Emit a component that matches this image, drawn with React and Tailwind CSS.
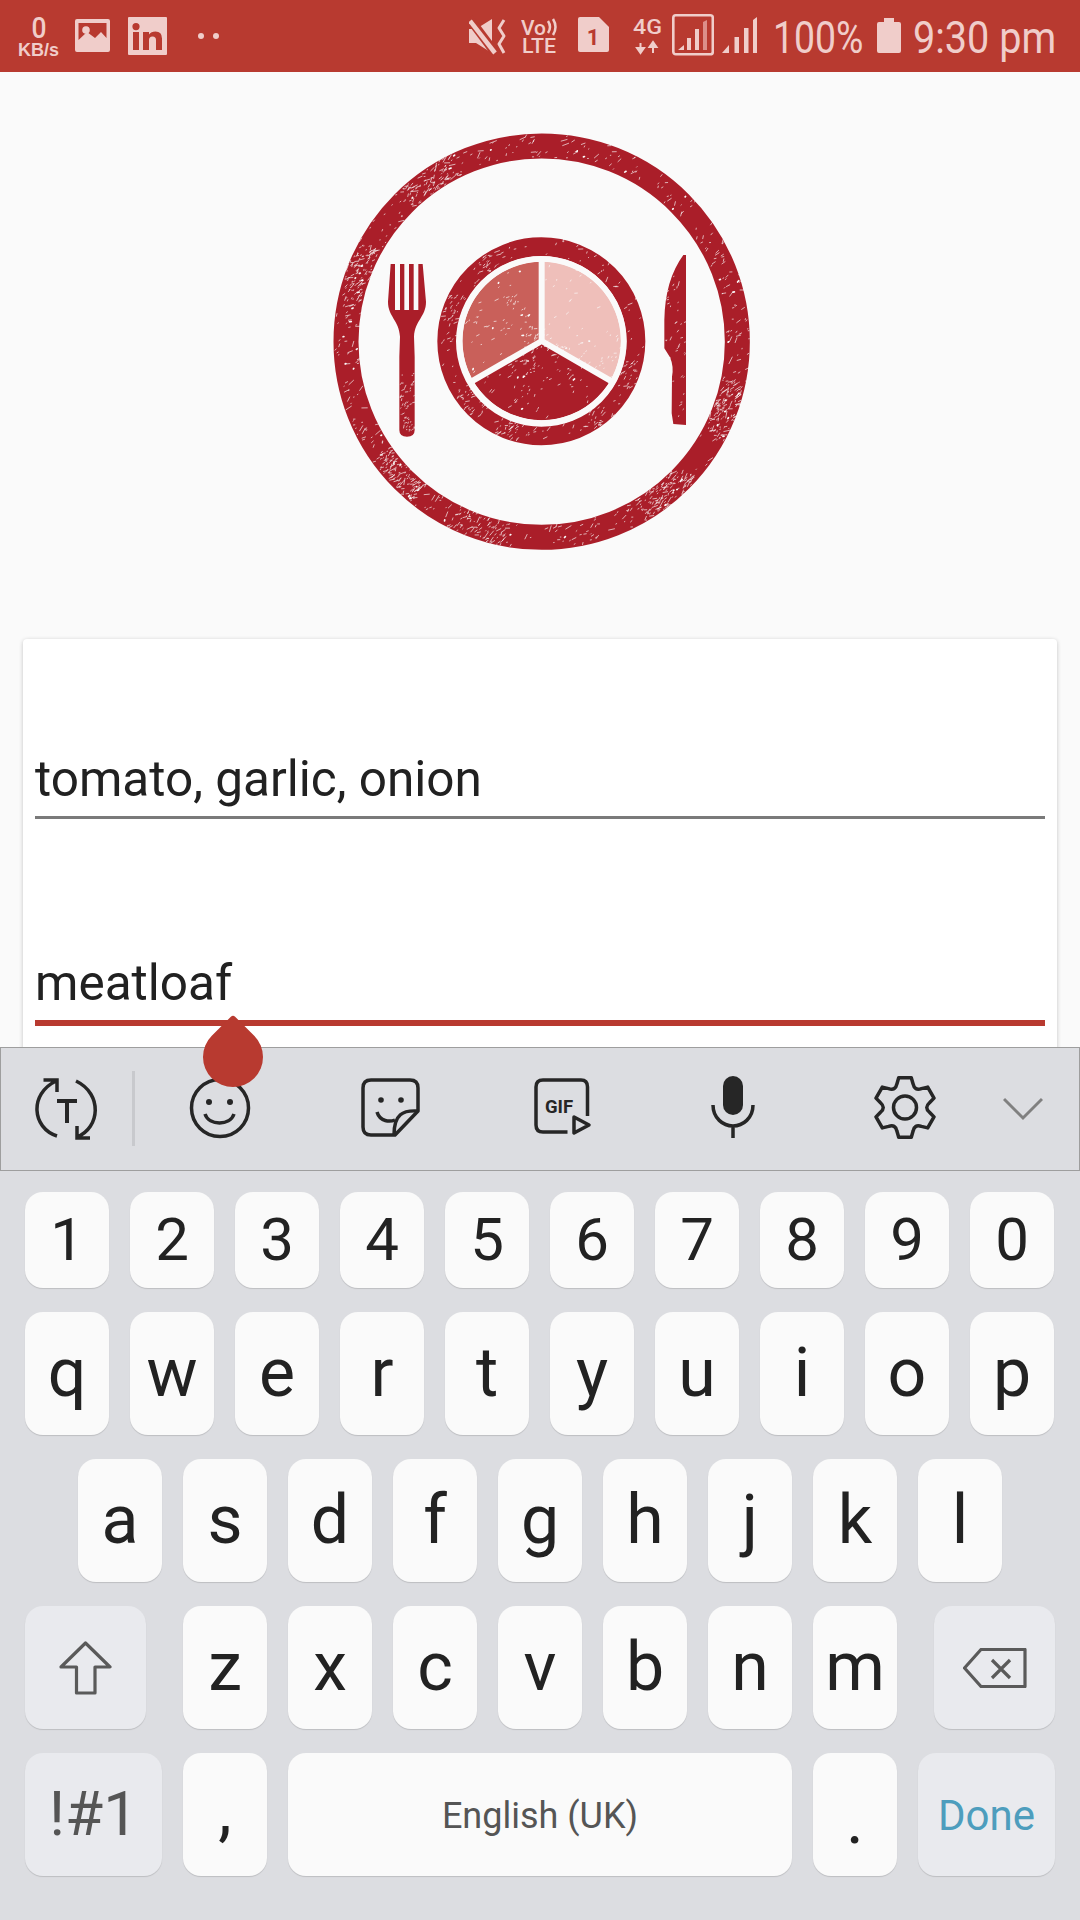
const rng = (s) => () => (s = (s * 16807) % 2147483647) / 2147483647;

function scratch(r, x, y, maxLen) {
  const len = 1.5 + r() * r() * maxLen;
  const a = -0.7 + (r() - 0.5) * 1.4;
  return `M${x.toFixed(1)} ${y.toFixed(1)}l${(Math.cos(a) * len).toFixed(1)} ${(Math.sin(a) * len).toFixed(1)}`;
}
function ringSpecks(seed, cx, cy, r0, r1, n, maxLen) {
  const r = rng(seed);
  let d = "";
  for (let i = 0; i < n; i++) {
    let a = r() * Math.PI * 2;
    if (r() < 0.55) a = [3.5, 2.4, 0.35, 0.9, 1.9, 4.1][Math.floor(r() * 6)] + (r() - 0.5) * 0.3;
    const rad = r0 + r() * (r1 - r0);
    d += scratch(r, cx + Math.cos(a) * rad, cy + Math.sin(a) * rad, maxLen);
  }
  return d;
}
function boxSpecks(seed, x0, y0, x1, y1, n, maxLen) {
  const r = rng(seed);
  let d = "";
  for (let i = 0; i < n; i++) d += scratch(r, x0 + r() * (x1 - x0), y0 + r() * (y1 - y0), maxLen);
  return d;
}
const fine =
  ringSpecks(11, 665, 665, 552, 624, 950, 22) +
  ringSpecks(23, 664, 664, 258, 310, 240, 16) +
  ringSpecks(37, 665, 663, 6, 236, 230, 11) +
  boxSpecks(41, 240, 760, 282, 940, 50, 12) +
  boxSpecks(43, 1036, 460, 1096, 910, 45, 12);
const blobs = ringSpecks(53, 665, 665, 556, 622, 45, 8) + ringSpecks(59, 665, 663, 20, 230, 16, 5);

function sector(cx, cy, r, a0, a1) {
  const p = (a) => `${(cx + Math.cos(a) * r).toFixed(1)} ${(cy + Math.sin(a) * r).toFixed(1)}`;
  return `M${cx} ${cy}L${p(a0)}A${r} ${r} 0 0 1 ${p(a1)}Z`;
}
const D = Math.PI / 180;
const spoke = (a) => `M665 663L${(665 + Math.cos(a) * 250).toFixed(1)} ${(663 + Math.sin(a) * 250).toFixed(1)}`;

function Logo() {
  return (
    <svg viewBox="0 0 1320 1320" className="h-[440px] w-[440px]">
      <circle cx="665" cy="665" r="587" fill="none" stroke="#aa1e29" strokeWidth="75" />
      <circle cx="664" cy="664" r="284" fill="none" stroke="#aa1e29" strokeWidth="56" />
      <path d={sector(665, 663, 238, -90 * D, 30 * D)} fill="#efbfba" />
      <path d={sector(665, 663, 238, 150 * D, 270 * D)} fill="#c9605a" />
      <path d={sector(665, 663, 238, 30 * D, 150 * D)} fill="#aa1e29" />
      <path d="M212 432H225V570H240V432H253V570H267V432H281V570H295V432H308L318 545C318 590 285 600 282 650L284 710V930Q284 950 261 950Q238 950 238 930V710L240 650C237 600 204 590 204 545Z" fill="#aa1e29" />
      <path d="M1090 405H1098V915L1060 912L1055 880L1056 770Q1062 740 1050 712L1033 685V600Q1035 480 1090 405Z" fill="#aa1e29" />
      <path d={fine} stroke="#fafafa" strokeWidth="2" fill="none" strokeLinecap="round" />
      <path d={blobs} stroke="#fafafa" strokeWidth="5" fill="none" strokeLinecap="round" />
      <path d={`${spoke(-90 * D)}${spoke(30 * D)}${spoke(150 * D)}`} stroke="#fafafa" strokeWidth="18" fill="none" />
      <circle cx="665" cy="663" r="246" fill="none" stroke="#fafafa" strokeWidth="17" />
    </svg>
  );
}

const SB = "#f0cdca";

function StatusBar() {
  return (
    <div className="flex h-[72px] shrink-0 justify-between bg-[#b83a30] pl-[18px] pr-[25px] text-[#f0cdca]">
      <div className="flex">
        <svg width="42" height="72" viewBox="0 0 42 72">
          <text x="21" y="38" textAnchor="middle" fontSize="30" fontFamily="Roboto" fontWeight="500" fill={SB} textLength="15" lengthAdjust="spacingAndGlyphs">0</text>
          <text x="0" y="56" fontSize="18" fontFamily="Liberation Sans" fontWeight="700" fill={SB} textLength="41" lengthAdjust="spacingAndGlyphs">KB/s</text>
        </svg>
        <svg width="35" height="72" viewBox="0 0 35 72" className="ml-[15px]">
          <path fillRule="evenodd" d="M2 19H33Q35 19 35 21V50Q35 52 33 52H2Q0 52 0 50V21Q0 19 2 19ZM3.500 23V40L12 32L20 38L26 32L31.500 38V23Z" fill={SB} />
          <circle cx="11" cy="30" r="3.800" fill={SB} />
        </svg>
        <svg width="39" height="72" viewBox="0 0 39 72" className="ml-[18px]">
          <path fillRule="evenodd" d="M1 17H38Q39 17 39 18V54Q39 55 38 55H1Q0 55 0 54V18Q0 17 1 17ZM5 32V50H11V32ZM8 23A3.600 3.600 0 1 0 8 30.200A3.600 3.600 0 1 0 8 23ZM15 32V50H21V40Q21 36.500 24.500 36.500Q28 36.500 28 40V50H34V38.500Q34 31.500 27.500 31.500Q23 31.500 21 34.500V32Z" fill={SB} />
        </svg>
        <svg width="24" height="72" viewBox="0 0 24 72" className="ml-[30px]">
          <circle cx="4" cy="36" r="3" fill={SB} />
          <circle cx="19" cy="36" r="3" fill={SB} />
        </svg>
      </div>
      <div className="flex">
        <svg width="38" height="72" viewBox="0 0 38 72">
          <path d="M0 29H7L23 19V53L7 43H0Z" fill={SB} />
          <path d="M0 18L27 54" stroke="#b83a30" strokeWidth="9" />
          <path d="M1 21L26 53" stroke={SB} strokeWidth="4.500" />
          <path d="M35 20L30 28L35 36L30 44L35 53" stroke={SB} strokeWidth="3" fill="none" strokeLinejoin="round" />
        </svg>
        <svg width="38" height="72" viewBox="0 0 38 72" className="ml-[14px]">
          <text x="0" y="35" fontSize="21" fontFamily="Roboto" fontWeight="500" fill={SB} textLength="25" lengthAdjust="spacingAndGlyphs">Vo</text>
          <path d="M27 21Q31 27 27 33M32 19Q37 27 32 35" stroke={SB} strokeWidth="2.500" fill="none" />
          <text x="1" y="53" fontSize="20" fontFamily="Roboto" fontWeight="500" fill={SB} textLength="34" lengthAdjust="spacingAndGlyphs">LTE</text>
        </svg>
        <svg width="31" height="72" viewBox="0 0 31 72" className="ml-[19px]">
          <path d="M2 17H21L31 27V50Q31 52 29 52H2Q0 52 0 50V19Q0 17 2 17Z" fill={SB} />
          <text x="15" y="45" textAnchor="middle" fontSize="22" fontFamily="Roboto" fontWeight="700" fill="#b83a30">1</text>
        </svg>
        <svg width="30" height="72" viewBox="0 0 30 72" className="ml-[24px]">
          <text x="0" y="34" fontSize="20" fontFamily="Roboto" fontWeight="500" fill={SB} textLength="29" lengthAdjust="spacingAndGlyphs">4G</text>
          <path d="M7.500 43V48M4 48H11L7.500 53Z M20 53V47M16.500 47H23.500L20 42Z" stroke={SB} strokeWidth="2" fill={SB} />
        </svg>
        <svg width="42" height="72" viewBox="0 0 42 72" className="ml-[9px]">
          <rect x="1.300" y="15.300" width="39.500" height="39" rx="2.500" fill="none" stroke={SB} strokeWidth="2.600" />
          <path d="M6 50L12 45V50Z M15 38H19V50H15Z M23 29H27V50H23Z" fill={SB} />
          <path d="M31 22L35 20V50H31Z" fill="#dc8f8a" />
        </svg>
        <svg width="36" height="72" viewBox="0 0 36 72" className="ml-[8px]">
          <path d="M0 53L7 45V53Z M12.500 37H17V53H12.500Z M22 28H26.500V53H22Z M31 20L35 17V53H31Z" fill={SB} />
        </svg>
        <span className="ml-[15px] inline-block w-[90px] origin-left scale-x-[0.85] pt-[2px] text-[44px] font-normal leading-[72px] whitespace-nowrap">100%</span>
        <svg width="24" height="72" viewBox="0 0 24 72" className="ml-[14px]">
          <path d="M7 18H17V22H22Q24 22 24 24V51Q24 53 22 53H2Q0 53 0 51V24Q0 22 2 22H7Z" fill={SB} />
        </svg>
        <span className="ml-[12px] inline-block w-[142px] origin-left scale-x-[0.9] pt-[2px] text-[44px] font-normal leading-[72px] whitespace-nowrap">9:30 pm</span>
      </div>
    </div>
  );
}

const gearPath = (() => {
  const cx = 31, cy = 32.5;
  const pt = (a, r) => `${(cx + Math.cos(a * D) * r).toFixed(1)} ${(cy + Math.sin(a * D) * r).toFixed(1)}`;
  let d = "";
  for (let i = 0; i < 6; i++) {
    const a = -90 + i * 60;
    d += `${i === 0 ? "M" : "L"}${pt(a - 19, 25)}L${pt(a - 12, 30.5)}L${pt(a + 12, 30.5)}L${pt(a + 19, 25)}Q${pt(a + 30, 19)} ${pt(a + 41, 25)}`;
  }
  return d + "Z";
})();

const INK = "#262626";

function Toolbar() {
  return (
    <div className="flex h-[124px] shrink-0 border border-[#9e9e9e] bg-[#dcdde1] pt-[28px]">
      <svg width="64" height="64" viewBox="0 0 64 64" fill="none" stroke={INK} strokeWidth="3.500" className="ml-[34px] mt-[2px]">
        <path d="M21 3C-6 16 -3 50 22 58M8.500 2H22V14" />
        <path d="M41 3C68 16 65 50 42 59M55 60H42V48" />
        <path d="M22 23H42M32 23V45" strokeWidth="4" />
      </svg>
      <div className="ml-[33px] mt-[-5px] h-[75px] w-[3px] bg-[#c8c9cd]" />
      <svg width="62" height="62" viewBox="0 0 62 62" fill="none" stroke={INK} strokeWidth="3.500" className="ml-[54px] mt-[1px]">
        <circle cx="31" cy="31" r="28.500" />
        <circle cx="20" cy="25" r="3" fill={INK} stroke="none" />
        <circle cx="41" cy="25" r="3" fill={INK} stroke="none" />
        <path d="M16 37C20 49 41 49 45 37" />
      </svg>
      <svg width="60" height="60" viewBox="0 0 60 60" fill="none" stroke={INK} strokeWidth="3.500" className="ml-[110px] mt-[2px]">
        <path d="M34 57H10Q2 57 2 49V10Q2 2 10 2H49Q57 2 57 10V33Z" strokeLinejoin="round" />
        <path d="M57 33C42 32 33 36 33 57" />
        <path d="M16 34C19 44 29 44 34 42" />
        <circle cx="20" cy="22" r="2.800" fill={INK} stroke="none" />
        <circle cx="40" cy="22" r="2.800" fill={INK} stroke="none" />
      </svg>
      <svg width="60" height="60" viewBox="0 0 60 60" fill="none" stroke={INK} strokeWidth="3.500" className="ml-[112px] mt-[2px]">
        <path d="M34.500 54H10Q3 54 3 47V9Q3 2 10 2H48Q54.500 2 54.500 9V38" />
        <path d="M41 39L56 47L41 55Z" strokeLinejoin="round" />
        <text x="12" y="35" fontSize="18.500" fontFamily="Roboto" fontWeight="700" fill={INK} stroke="none">GIF</text>
      </svg>
      <svg width="44" height="63" viewBox="0 0 44 63" fill="none" stroke={INK} strokeWidth="3.500" className="ml-[118px]">
        <rect x="12" y="0" width="20" height="39" rx="10" fill={INK} stroke="none" />
        <path d="M2 29C2 42 12 50 22 50C32 50 42 42 42 29M22 50V62" />
      </svg>
      <svg width="62" height="65" viewBox="0 0 62 65" fill="none" stroke={INK} strokeWidth="3.500" strokeLinejoin="round" className="ml-[119px] mt-[-1px]">
        <path d={gearPath} />
        <circle cx="31" cy="32.500" r="11.500" />
      </svg>
      <svg width="40" height="24" viewBox="0 0 40 24" fill="none" stroke="#808080" strokeWidth="3" className="ml-[67px] mt-[21px]">
        <path d="M1 2L20 21L39 2" />
      </svg>
    </div>
  );
}

const KEY = "flex shrink-0 justify-center rounded-[18px] bg-[#fafafa] shadow-[0_1px_1px_rgba(0,0,0,0.14)] text-[#222222] text-[68px] leading-[68px]";
const FN = "flex shrink-0 justify-center rounded-[18px] bg-[#e9eaee] shadow-[0_1px_1px_rgba(0,0,0,0.14)] text-[#555555]";

function LetterRow({ keys, className }) {
  return (
    <div className={`flex h-[123px] gap-[21px] ${className}`}>
      {keys.map((k) => (
        <div key={k} className={`${KEY} w-[84px] pt-[27px]`}>{k}</div>
      ))}
    </div>
  );
}

function Keyboard() {
  return (
    <div className="flex flex-1 flex-col gap-[24px] bg-[#dcdde1] pt-[21px]">
      <div className="flex h-[96px] gap-[21px] pl-[25px]">
        {"1234567890".split("").map((k) => (
          <div key={k} className={`${KEY} w-[84px] !text-[60px] !leading-[60px] pt-[18px]`}>{k}</div>
        ))}
      </div>
      <LetterRow keys={"qwertyuiop".split("")} className="pl-[25px]" />
      <LetterRow keys={"asdfghjkl".split("")} className="pl-[78px]" />
      <div className="flex h-[123px] gap-[21px] pl-[25px]">
        <div className={`${FN} mr-[16px] w-[121px] items-center`}>
          <svg width="54" height="54" viewBox="0 0 54 54" fill="none" stroke="#5a5a5a" strokeWidth="3.200" strokeLinejoin="round">
            <path d="M26.500 2L51 26H36V52H17.500V26H2Z" />
          </svg>
        </div>
        {"zxcvbnm".split("").map((k) => (
          <div key={k} className={`${KEY} w-[84px] pt-[27px]`}>{k}</div>
        ))}
        <div className={`${FN} ml-[16px] w-[121px] items-center`}>
          <svg width="64" height="40" viewBox="0 0 64 40" fill="none" stroke="#5a5a5a" strokeWidth="3.200" strokeLinejoin="round">
            <path d="M18 1.500H62V38.500H18L1.500 20Z" />
            <path d="M29 12L47 30M47 12L29 30" />
          </svg>
        </div>
      </div>
      <div className="flex h-[123px] gap-[21px] pl-[25px]">
        <div className={`${FN} w-[137px] pt-[30px] text-[62px] leading-[62px]`}>!#1</div>
        <div className={`${KEY} w-[84px] pt-[23px]`}>,</div>
        <div className={`${KEY} w-[504px] pt-[43px] !text-[36px] !leading-[40px] !text-[#555555]`}>English (UK)</div>
        <div className={`${KEY} w-[84px] pt-[33px]`}>.</div>
        <div className={`${FN} w-[137px] pt-[41px] text-[42px] leading-[44px] !text-[#4d9dbd]`}>Done</div>
      </div>
    </div>
  );
}

export default function App() {
  return (
    <div className="relative flex h-[1920px] w-[1080px] flex-col overflow-hidden bg-[#fafafa] [font-family:Roboto,sans-serif]">
      <StatusBar />
      <div className="h-[975px] shrink-0 overflow-hidden">
        <div className="mx-auto mt-[48px] h-[440px] w-[440px]">
          <Logo />
        </div>
        <div className="mx-[23px] mt-[79px] h-[600px] rounded-[4px] bg-white px-[12px] pt-[112px] shadow-[0_1px_4px_rgba(0,0,0,0.22)]">
          <div className="border-b-[3px] border-[#7a7a7a] pb-[9px] text-[49.500px] leading-[56px] text-[#212121]">tomato, garlic, onion</div>
          <div className="mt-[136px] border-b-[6px] border-[#b83a30] pb-[9px] text-[49.500px] leading-[56px] text-[#212121]">meatloaf</div>
        </div>
      </div>
      <Toolbar />
      <Keyboard />
      <div className="absolute left-[203px] top-[1027px] h-[60px] w-[60px] rotate-45 rounded-[50%] rounded-tl-[3px] bg-[#b83a30]" />
    </div>
  );
}
